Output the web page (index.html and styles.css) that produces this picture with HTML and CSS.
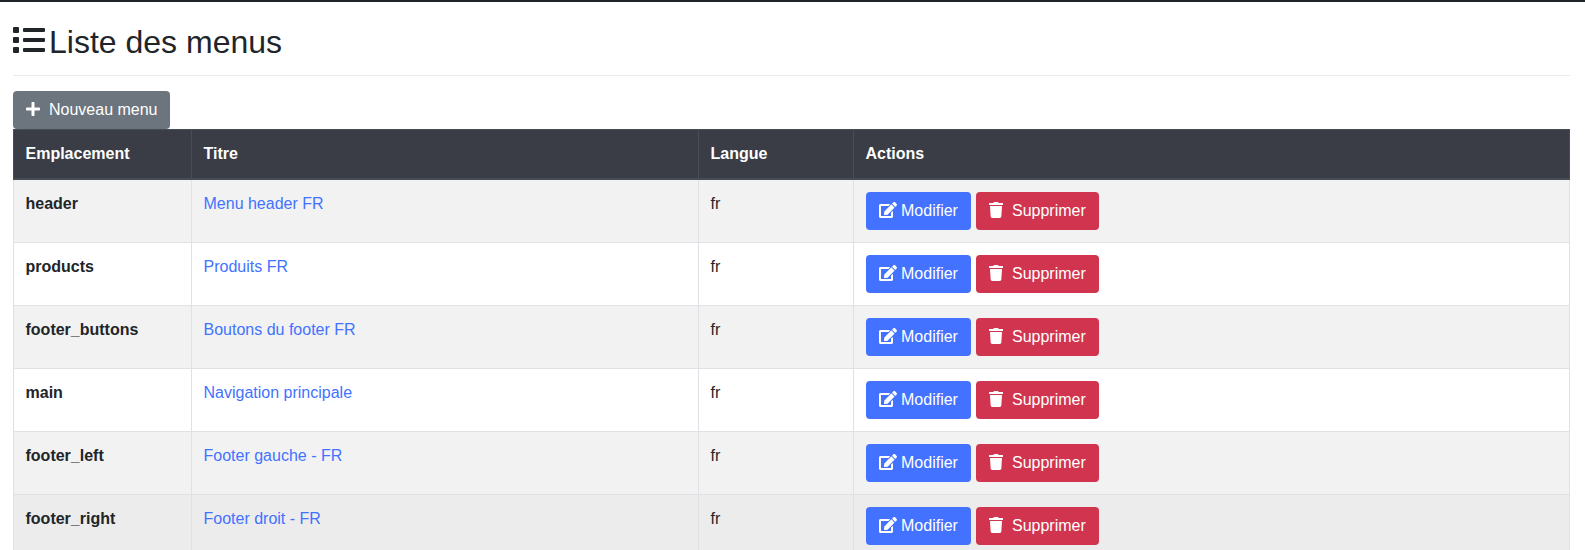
FILE: index.html
```html
<!DOCTYPE html>
<html lang="fr">
<head>
<meta charset="utf-8">
<title>Liste des menus</title>
<link rel="stylesheet" href="styles.css">
</head>
<body>
<div class="page">
  <h1 class="title">
    <svg class="title-icon" viewBox="0 0 512 512"><path d="M80 368H16a16 16 0 0 0-16 16v64a16 16 0 0 0 16 16h64a16 16 0 0 0 16-16v-64a16 16 0 0 0-16-16zm0-320H16A16 16 0 0 0 0 64v64a16 16 0 0 0 16 16h64a16 16 0 0 0 16-16V64a16 16 0 0 0-16-16zm0 160H16a16 16 0 0 0-16 16v64a16 16 0 0 0 16 16h64a16 16 0 0 0 16-16v-64a16 16 0 0 0-16-16zm416 176H176a16 16 0 0 0-16 16v32a16 16 0 0 0 16 16h320a16 16 0 0 0 16-16v-32a16 16 0 0 0-16-16zm0-320H176a16 16 0 0 0-16 16v32a16 16 0 0 0 16 16h320a16 16 0 0 0 16-16V80a16 16 0 0 0-16-16zm0 160H176a16 16 0 0 0-16 16v32a16 16 0 0 0 16 16h320a16 16 0 0 0 16-16v-32a16 16 0 0 0-16-16z"/></svg>
    <span class="title-text">Liste des menus</span>
  </h1>
  <a class="btn btn-new" href="#">
    <svg class="icon icon-plus" viewBox="0 0 448 512"><path d="M416 208H272V64c0-17.67-14.33-32-32-32h-32c-17.67 0-32 14.33-32 32v144H32c-17.67 0-32 14.33-32 32v32c0 17.67 14.33 32 32 32h144v144c0 17.67 14.33 32 32 32h32c17.67 0 32-14.33 32-32V304h144c17.67 0 32-14.33 32-32v-32c0-17.67-14.33-32-32-32z"/></svg>
    Nouveau menu
  </a>
  <table class="menus">
    <colgroup><col class="c1"><col class="c2"><col class="c3"><col></colgroup>
    <thead>
      <tr><th>Emplacement</th><th>Titre</th><th>Langue</th><th>Actions</th></tr>
    </thead>
    <tbody>
      <tr class="odd first">
        <td class="strong">header</td><td><a href="#">Menu header FR</a></td><td>fr</td>
        <td><div class="actions"><a class="btn btn-edit" href="#"><svg class="icon icon-edit" viewBox="0 0 576 512"><path d="M402.6 83.2l90.2 90.2c3.8 3.8 3.8 10 0 13.8L274.4 405.6l-92.8 10.3c-12.4 1.4-22.9-9.1-21.5-21.5l10.3-92.8L388.8 83.2c3.8-3.8 10-3.8 13.8 0zm162-22.9l-48.8-48.8c-15.2-15.2-39.9-15.2-55.2 0l-35.4 35.4c-3.8 3.8-3.8 10 0 13.8l90.2 90.2c3.8 3.8 10 3.8 13.8 0l35.4-35.4c15.2-15.3 15.2-40 0-55.2zM384 346.2V448H64V128h229.8c3.2 0 6.2-1.3 8.5-3.5l40-40c7.6-7.6 2.2-20.5-8.5-20.5H48C21.5 64 0 85.5 0 112v352c0 26.5 21.5 48 48 48h352c26.5 0 48-21.5 48-48V306.2c0-10.7-12.9-16-20.5-8.5l-40 40c-2.2 2.3-3.5 5.3-3.5 8.5z"/></svg>Modifier</a><a class="btn btn-del" href="#"><svg class="icon icon-trash" viewBox="0 0 448 512"><path d="M432 32H312l-9.4-18.7A24 24 0 0 0 281.1 0H166.8a23.72 23.72 0 0 0-21.4 13.3L136 32H16A16 16 0 0 0 0 48v32a16 16 0 0 0 16 16h416a16 16 0 0 0 16-16V48a16 16 0 0 0-16-16zM53.2 467a48 48 0 0 0 47.9 45h245.8a48 48 0 0 0 47.9-45L416 128H32z"/></svg>Supprimer</a></div></td>
      </tr>
      <tr>
        <td class="strong">products</td><td><a href="#">Produits FR</a></td><td>fr</td>
        <td><div class="actions"><a class="btn btn-edit" href="#"><svg class="icon icon-edit" viewBox="0 0 576 512"><path d="M402.6 83.2l90.2 90.2c3.8 3.8 3.8 10 0 13.8L274.4 405.6l-92.8 10.3c-12.4 1.4-22.9-9.1-21.5-21.5l10.3-92.8L388.8 83.2c3.8-3.8 10-3.8 13.8 0zm162-22.9l-48.8-48.8c-15.2-15.2-39.9-15.2-55.2 0l-35.4 35.4c-3.8 3.8-3.8 10 0 13.8l90.2 90.2c3.8 3.8 10 3.8 13.8 0l35.4-35.4c15.2-15.3 15.2-40 0-55.2zM384 346.2V448H64V128h229.8c3.2 0 6.2-1.3 8.5-3.5l40-40c7.6-7.6 2.2-20.5-8.5-20.5H48C21.5 64 0 85.5 0 112v352c0 26.5 21.5 48 48 48h352c26.5 0 48-21.5 48-48V306.2c0-10.7-12.9-16-20.5-8.5l-40 40c-2.2 2.3-3.5 5.3-3.5 8.5z"/></svg>Modifier</a><a class="btn btn-del" href="#"><svg class="icon icon-trash" viewBox="0 0 448 512"><path d="M432 32H312l-9.4-18.7A24 24 0 0 0 281.1 0H166.8a23.72 23.72 0 0 0-21.4 13.3L136 32H16A16 16 0 0 0 0 48v32a16 16 0 0 0 16 16h416a16 16 0 0 0 16-16V48a16 16 0 0 0-16-16zM53.2 467a48 48 0 0 0 47.9 45h245.8a48 48 0 0 0 47.9-45L416 128H32z"/></svg>Supprimer</a></div></td>
      </tr>
      <tr class="odd">
        <td class="strong">footer_buttons</td><td><a href="#">Boutons du footer FR</a></td><td>fr</td>
        <td><div class="actions"><a class="btn btn-edit" href="#"><svg class="icon icon-edit" viewBox="0 0 576 512"><path d="M402.6 83.2l90.2 90.2c3.8 3.8 3.8 10 0 13.8L274.4 405.6l-92.8 10.3c-12.4 1.4-22.9-9.1-21.5-21.5l10.3-92.8L388.8 83.2c3.8-3.8 10-3.8 13.8 0zm162-22.9l-48.8-48.8c-15.2-15.2-39.9-15.2-55.2 0l-35.4 35.4c-3.8 3.8-3.8 10 0 13.8l90.2 90.2c3.8 3.8 10 3.8 13.8 0l35.4-35.4c15.2-15.3 15.2-40 0-55.2zM384 346.2V448H64V128h229.8c3.2 0 6.2-1.3 8.5-3.5l40-40c7.6-7.6 2.2-20.5-8.5-20.5H48C21.5 64 0 85.5 0 112v352c0 26.5 21.5 48 48 48h352c26.5 0 48-21.5 48-48V306.2c0-10.7-12.9-16-20.5-8.5l-40 40c-2.2 2.3-3.5 5.3-3.5 8.5z"/></svg>Modifier</a><a class="btn btn-del" href="#"><svg class="icon icon-trash" viewBox="0 0 448 512"><path d="M432 32H312l-9.4-18.7A24 24 0 0 0 281.1 0H166.8a23.72 23.72 0 0 0-21.4 13.3L136 32H16A16 16 0 0 0 0 48v32a16 16 0 0 0 16 16h416a16 16 0 0 0 16-16V48a16 16 0 0 0-16-16zM53.2 467a48 48 0 0 0 47.9 45h245.8a48 48 0 0 0 47.9-45L416 128H32z"/></svg>Supprimer</a></div></td>
      </tr>
      <tr>
        <td class="strong">main</td><td><a href="#">Navigation principale</a></td><td>fr</td>
        <td><div class="actions"><a class="btn btn-edit" href="#"><svg class="icon icon-edit" viewBox="0 0 576 512"><path d="M402.6 83.2l90.2 90.2c3.8 3.8 3.8 10 0 13.8L274.4 405.6l-92.8 10.3c-12.4 1.4-22.9-9.1-21.5-21.5l10.3-92.8L388.8 83.2c3.8-3.8 10-3.8 13.8 0zm162-22.9l-48.8-48.8c-15.2-15.2-39.9-15.2-55.2 0l-35.4 35.4c-3.8 3.8-3.8 10 0 13.8l90.2 90.2c3.8 3.8 10 3.8 13.8 0l35.4-35.4c15.2-15.3 15.2-40 0-55.2zM384 346.2V448H64V128h229.8c3.2 0 6.2-1.3 8.5-3.5l40-40c7.6-7.6 2.2-20.5-8.5-20.5H48C21.5 64 0 85.5 0 112v352c0 26.5 21.5 48 48 48h352c26.5 0 48-21.5 48-48V306.2c0-10.7-12.9-16-20.5-8.5l-40 40c-2.2 2.3-3.5 5.3-3.5 8.5z"/></svg>Modifier</a><a class="btn btn-del" href="#"><svg class="icon icon-trash" viewBox="0 0 448 512"><path d="M432 32H312l-9.4-18.7A24 24 0 0 0 281.1 0H166.8a23.72 23.72 0 0 0-21.4 13.3L136 32H16A16 16 0 0 0 0 48v32a16 16 0 0 0 16 16h416a16 16 0 0 0 16-16V48a16 16 0 0 0-16-16zM53.2 467a48 48 0 0 0 47.9 45h245.8a48 48 0 0 0 47.9-45L416 128H32z"/></svg>Supprimer</a></div></td>
      </tr>
      <tr class="odd">
        <td class="strong">footer_left</td><td><a href="#">Footer gauche - FR</a></td><td>fr</td>
        <td><div class="actions"><a class="btn btn-edit" href="#"><svg class="icon icon-edit" viewBox="0 0 576 512"><path d="M402.6 83.2l90.2 90.2c3.8 3.8 3.8 10 0 13.8L274.4 405.6l-92.8 10.3c-12.4 1.4-22.9-9.1-21.5-21.5l10.3-92.8L388.8 83.2c3.8-3.8 10-3.8 13.8 0zm162-22.9l-48.8-48.8c-15.2-15.2-39.9-15.2-55.2 0l-35.4 35.4c-3.8 3.8-3.8 10 0 13.8l90.2 90.2c3.8 3.8 10 3.8 13.8 0l35.4-35.4c15.2-15.3 15.2-40 0-55.2zM384 346.2V448H64V128h229.8c3.2 0 6.2-1.3 8.5-3.5l40-40c7.6-7.6 2.2-20.5-8.5-20.5H48C21.5 64 0 85.5 0 112v352c0 26.5 21.5 48 48 48h352c26.5 0 48-21.5 48-48V306.2c0-10.7-12.9-16-20.5-8.5l-40 40c-2.2 2.3-3.5 5.3-3.5 8.5z"/></svg>Modifier</a><a class="btn btn-del" href="#"><svg class="icon icon-trash" viewBox="0 0 448 512"><path d="M432 32H312l-9.4-18.7A24 24 0 0 0 281.1 0H166.8a23.72 23.72 0 0 0-21.4 13.3L136 32H16A16 16 0 0 0 0 48v32a16 16 0 0 0 16 16h416a16 16 0 0 0 16-16V48a16 16 0 0 0-16-16zM53.2 467a48 48 0 0 0 47.9 45h245.8a48 48 0 0 0 47.9-45L416 128H32z"/></svg>Supprimer</a></div></td>
      </tr>
      <tr class="hover">
        <td class="strong">footer_right</td><td><a href="#">Footer droit - FR</a></td><td>fr</td>
        <td><div class="actions"><a class="btn btn-edit" href="#"><svg class="icon icon-edit" viewBox="0 0 576 512"><path d="M402.6 83.2l90.2 90.2c3.8 3.8 3.8 10 0 13.8L274.4 405.6l-92.8 10.3c-12.4 1.4-22.9-9.1-21.5-21.5l10.3-92.8L388.8 83.2c3.8-3.8 10-3.8 13.8 0zm162-22.9l-48.8-48.8c-15.2-15.2-39.9-15.2-55.2 0l-35.4 35.4c-3.8 3.8-3.8 10 0 13.8l90.2 90.2c3.8 3.8 10 3.8 13.8 0l35.4-35.4c15.2-15.3 15.2-40 0-55.2zM384 346.2V448H64V128h229.8c3.2 0 6.2-1.3 8.5-3.5l40-40c7.6-7.6 2.2-20.5-8.5-20.5H48C21.5 64 0 85.5 0 112v352c0 26.5 21.5 48 48 48h352c26.5 0 48-21.5 48-48V306.2c0-10.7-12.9-16-20.5-8.5l-40 40c-2.2 2.3-3.5 5.3-3.5 8.5z"/></svg>Modifier</a><a class="btn btn-del" href="#"><svg class="icon icon-trash" viewBox="0 0 448 512"><path d="M432 32H312l-9.4-18.7A24 24 0 0 0 281.1 0H166.8a23.72 23.72 0 0 0-21.4 13.3L136 32H16A16 16 0 0 0 0 48v32a16 16 0 0 0 16 16h416a16 16 0 0 0 16-16V48a16 16 0 0 0-16-16zM53.2 467a48 48 0 0 0 47.9 45h245.8a48 48 0 0 0 47.9-45L416 128H32z"/></svg>Supprimer</a></div></td>
      </tr>
    </tbody>
  </table>
</div>
</body>
</html>
```
FILE: styles.css
```css
* { box-sizing: border-box; }
html, body { margin: 0; padding: 0; background: #fff; }
body {
  font-family: "Liberation Sans", Arial, sans-serif;
  font-size: 16px;
  line-height: 24px;
  color: #212529;
}
.page {
  height: 550px;
  overflow: hidden;
  border-top: 2px solid #212529;
  padding: 0 15px 0 13px;
}
.title {
  display: flex;
  align-items: center;
  gap: 4px;
  margin: 0 0 15px;
  padding: 18px 0 16px;
  height: 74px;
  border-bottom: 1px solid #eaeaea;
  font-size: 32px;
  line-height: 38px;
  font-weight: 400;
}
.title-icon { width: 32px; height: 32px; fill: #212529; flex: none; }
.title-text { padding-top: 4px; }
.btn {
  display: inline-flex;
  align-items: center;
  height: 38px;
  padding: 0 13px;
  border-radius: 4px;
  color: #fff;
  text-decoration: none;
  white-space: nowrap;
}
.icon { fill: #fff; flex: none; height: 16px; margin-bottom: 2px; }
.btn-new { background: #6c757d; width: 157px; vertical-align: top; }
.icon-plus { width: 14px; margin-right: 9px; }
.btn-edit { background: #4272ff; width: 105px; }
.icon-edit { width: 18px; margin-right: 4px; }
.btn-del { background: #d1344e; width: 123px; }
.icon-trash { width: 14px; margin-right: 9px; }
.menus {
  width: 100%;
  border-collapse: collapse;
  table-layout: fixed;
}
.c1 { width: 178px; }
.c2 { width: 507px; }
.c3 { width: 155px; }
.menus th {
  background: #3a3d45;
  color: #fff;
  text-align: left;
  font-weight: 700;
  height: 49px;
  padding: 11px 12px 11px 11.5px;
  border: 1px solid #454d55;
  border-bottom-width: 2px;
}
.menus td {
  padding: 12px 12px 11px 11.5px;
  height: 63px;
  border: 1px solid #dee2e6;
  vertical-align: top;
}
.menus .first td { height: 64px; }
.menus td.strong { font-weight: 700; }
.menus td a:not(.btn) { color: #4272ff; text-decoration: none; }
.actions { display: flex; gap: 5px; margin-left: 0.5px; }
.odd td { background: #f2f2f2; }
.hover td { background: #ececec; }
```
